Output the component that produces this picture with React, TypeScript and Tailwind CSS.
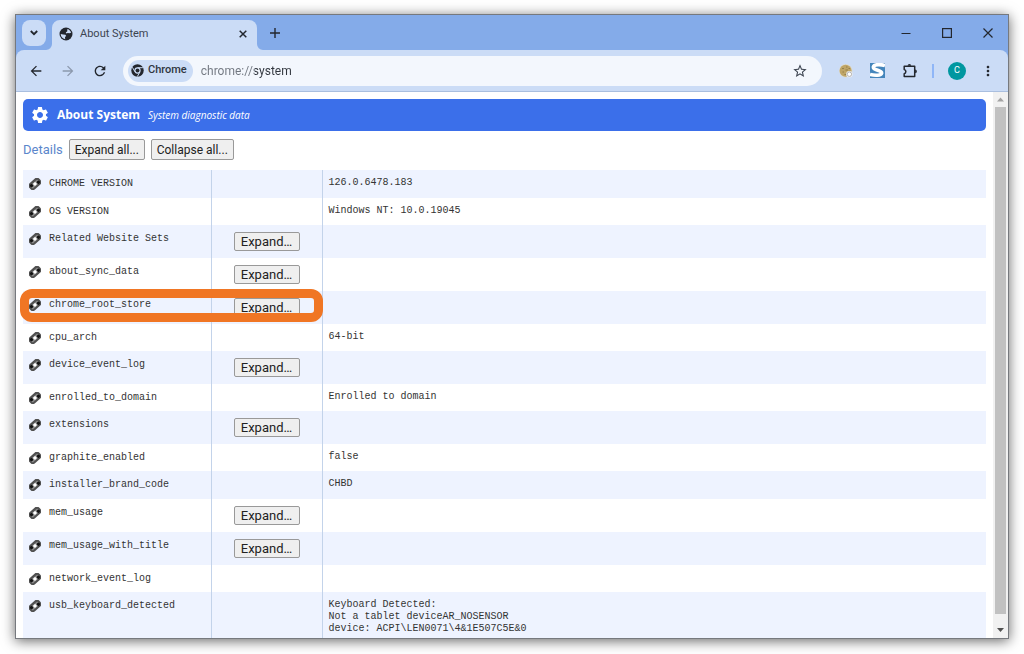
import React from 'react';
import { MdArrowBack, MdArrowForward, MdRefresh, MdSettings, MdStarBorder, MdMoreVert } from 'react-icons/md';

type LogEntry = {
    name: string;
    value?: string;
    expandable?: boolean;
    highlighted?: boolean;
};

const entries: LogEntry[] = [
    { name: 'CHROME VERSION', value: '126.0.6478.183' },
    { name: 'OS VERSION', value: 'Windows NT: 10.0.19045' },
    { name: 'Related Website Sets', expandable: true },
    { name: 'about_sync_data', expandable: true },
    { name: 'chrome_root_store', expandable: true, highlighted: true },
    { name: 'cpu_arch', value: '64-bit' },
    { name: 'device_event_log', expandable: true },
    { name: 'enrolled_to_domain', value: 'Enrolled to domain' },
    { name: 'extensions', expandable: true },
    { name: 'graphite_enabled', value: 'false' },
    { name: 'installer_brand_code', value: 'CHBD' },
    { name: 'mem_usage', expandable: true },
    { name: 'mem_usage_with_title', expandable: true },
    { name: 'network_event_log' },
    { name: 'usb_keyboard_detected', value: 'Keyboard Detected:\nNot a tablet deviceAR_NOSENSOR\ndevice: ACPI\\LEN0071\\4&1E507C5E&0' },
];

const LinkIcon: React.FC = () => (
    <svg viewBox="0 0 12 12" className="size-3 shrink-0" fill="none">
        <g transform="rotate(-42 6 6)">
            <rect x="-0.8" y="1.8" width="13.6" height="8.2" rx="3.6" fill="#505050" />
            <rect x="1" y="4" width="10" height="4" rx="1.6" fill="#888" />
            <rect x="0.8" y="3.4" width="3" height="3" rx="1" fill="#111" />
            <rect x="8.2" y="5.4" width="3" height="3" rx="1" fill="#111" />
            <rect x="4.4" y="4.4" width="3.2" height="3" rx="1" fill="#fff" />
        </g>
    </svg>
);

const GlobeIcon: React.FC = () => (
    <svg viewBox="0 0 14 14" className="size-3.5">
        <circle cx="7" cy="7" r="6.5" fill="#23272e" />
        <path d="M8.4 1.9C10.4 2.6 11.6 3.8 12.2 5.6L10.6 6.2 8.8 6 7.4 6.4 6.8 5.2 8.2 4.6ZM1.7 7 4.2 7.4 6.4 7.8 7.2 9 6 10 6.2 12.2C3.8 11.8 1.7 9.8 1.7 7Z" fill="#cbdcf6" />
    </svg>
);

const ChromeIcon: React.FC = () => (
    <svg viewBox="0 0 24 24" className="size-[13px]">
        <circle cx="12" cy="12" r="11.5" fill="#23272e" />
        <circle cx="12" cy="12" r="5.8" fill="#cbdcf6" />
        <circle cx="12" cy="12" r="3.6" fill="#23272e" />
        <path d="M12 6.8H22M7.5 14.6 2.5 6M16.5 14.6 11.5 23.4" stroke="#cbdcf6" strokeWidth="1.8" />
    </svg>
);

const CookieIcon: React.FC = () => (
    <svg viewBox="0 0 14 14" className="size-3.5">
        <circle cx="6.7" cy="6.8" r="6.7" fill="#dddbd0" />
        <circle cx="6.6" cy="6.8" r="6" fill="#bfa566" />
        <path d="M3 4.5h2M7 3h1.5M3.5 8H5M6.5 6h2.5M5.5 10.5H7M9.5 4.5H11" stroke="#8f7a48" strokeWidth="0.9" />
        <circle cx="10.4" cy="10.2" r="3.2" fill="#ededed" />
        <circle cx="10.4" cy="10.2" r="2.2" fill="#fff" stroke="#9a9a9a" strokeWidth="0.7" />
    </svg>
);

const SBadgeIcon: React.FC = () => (
    <svg viewBox="0 0 15 15" className="size-[15px]">
        <rect width="15" height="15" fill="#4485bb" />
        <path d="M15 2.6C11 1.2 4.4 1 3.4 3.8 2.6 7.4 12.4 7 11.6 10.2 11 12.6 5 12.8 0 11.4" fill="none" stroke="#fff" strokeWidth="3.6" />
    </svg>
);

const PuzzleIcon: React.FC = () => (
    <svg viewBox="0 0 16 16" className="size-4" fill="none" stroke="#23272e">
        <path d="M2.2 3.2H12.7V13.6H2.2V10.7C4.4 10.3 4.4 6.8 2.2 6.4Z" strokeWidth="1.5" strokeLinejoin="round" />
        <path d="M5.6 2.8a1.8 1.8 0 0 1 3.6 0ZM13.1 6.6a1.8 1.8 0 0 1 0 3.6Z" fill="#23272e" stroke="none" />
    </svg>
);

const TitleBar: React.FC = () => (
    <div className="flex h-[35px] items-end bg-[#84abe9] pl-1.5">
        <button aria-label="Search tabs" className="mb-1 flex h-[26px] w-6 items-center justify-center rounded-lg bg-[#cbdcf6]">
            <svg viewBox="0 0 8 6" className="h-1.5 w-2" fill="none" stroke="#23272e" strokeWidth="1.8">
                <path d="M.8 1 4 4.2 7.2 1" />
            </svg>
        </button>
        <div className="flex items-end">
            <svg viewBox="0 0 6 6" className="size-1.5" fill="#cbdcf6">
                <path d="M6 0V6H0A6 6 0 0 0 6 0Z" />
            </svg>
            <div className="flex h-[30px] w-[205px] items-center rounded-t-lg bg-[#cbdcf6] pr-2.5 pb-0.5 pl-[7px]">
                <GlobeIcon />
                <span className="ml-[7px] flex-1 text-[11px] text-[#3c4450]">About System</span>
                <button aria-label="Close tab">
                    <svg viewBox="0 0 8 8" className="size-2" stroke="#23272e" strokeWidth="1.5">
                        <path d="M.7.7 7.3 7.3M7.3.7.7 7.3" />
                    </svg>
                </button>
            </div>
            <svg viewBox="0 0 6 6" className="size-1.5" fill="#cbdcf6">
                <path d="M0 0V6H6A6 6 0 0 1 0 0Z" />
            </svg>
        </div>
        <button aria-label="New tab" className="mb-3 ml-[7px]">
            <svg viewBox="0 0 10 10" className="size-2.5" stroke="#23272e" strokeWidth="1.4">
                <path d="M5 0V10M0 5H10" />
            </svg>
        </button>
        <div className="mb-3 ml-auto flex gap-[31px] pr-[15px]">
            <button aria-label="Minimize">
                <svg viewBox="0 0 10 10" className="size-2.5" stroke="#23272e">
                    <path d="M.5 5.5H9.5" />
                </svg>
            </button>
            <button aria-label="Maximize">
                <svg viewBox="0 0 10 10" className="size-2.5" fill="none" stroke="#23272e" strokeWidth="1.2">
                    <rect x=".6" y=".6" width="8.8" height="8.8" />
                </svg>
            </button>
            <button aria-label="Close">
                <svg viewBox="0 0 10 10" className="size-2.5" stroke="#23272e" strokeWidth="1.2">
                    <path d="M.5.5 9.5 9.5M9.5.5.5 9.5" />
                </svg>
            </button>
        </div>
    </div>
);

const Toolbar: React.FC = () => (
    <div className="bg-[#84abe9]">
        <div className="flex h-[42px] items-center rounded-t-lg border-b border-[#aabfdf] bg-[#cbdcf6] pr-3 pl-3 text-[#23272e]">
            <div className="flex gap-4">
                <button aria-label="Back"><MdArrowBack className="size-4" /></button>
                <button aria-label="Forward"><MdArrowForward className="size-4 text-[#8c99ad]" /></button>
                <button aria-label="Reload"><MdRefresh className="size-4" /></button>
            </div>
            <div className="ml-[15px] flex h-[30px] flex-1 items-center rounded-full bg-[#f3f7fd] pr-3.5 pl-[5px]">
                <div className="flex h-[22px] items-center gap-1 rounded-full bg-[#cbdcf6] pr-1.5 pl-[3px] text-[11px] font-medium text-[#2f3640]">
                    <ChromeIcon />
                    Chrome
                </div>
                <input
                    aria-label="Address"
                    defaultValue="chrome://system"
                    className="ml-2 h-5 min-w-0 flex-1 bg-[linear-gradient(to_right,#70767f_54px,#30353d_54px)] bg-clip-text text-xs text-transparent outline-none"
                />
                <button aria-label="Bookmark"><MdStarBorder className="size-4 text-[#3c4450]" /></button>
            </div>
            <div className="ml-[17px] flex items-center">
                <button aria-label="Cookie settings"><CookieIcon /></button>
                <button aria-label="Snippet tool" className="ml-[17px]"><SBadgeIcon /></button>
                <button aria-label="Extensions" className="ml-[17px]"><PuzzleIcon /></button>
                <span className="ml-3.5 h-3.5 w-0.5 bg-[#8fb6f7]" />
                <button aria-label="Profile" className="ml-3.5 flex size-[18px] items-center justify-center rounded-full bg-[#0097a0] text-[9px] text-white">C</button>
                <button aria-label="Menu" className="ml-3.5"><MdMoreVert className="size-4" /></button>
            </div>
        </div>
    </div>
);

const LogRow: React.FC<{ entry: LogEntry }> = ({ entry }) => (
    <tr className={entry.expandable ? 'h-[33px] odd:bg-[#eef3ff]' : 'odd:h-7 odd:bg-[#eef3ff] even:h-[27px]'}>
        <th scope="row" className="relative border-r border-[#c3d3ea] p-0 pt-2 pl-1.5 text-left align-top font-normal">
            <div className="flex items-center gap-2">
                <LinkIcon />
                {entry.name}
            </div>
            {entry.highlighted && (
                <div className="absolute -top-0.5 -left-[3px] z-10 h-[33px] w-[303px] rounded-xl border-[9px] border-[#f07624]" />
            )}
        </th>
        <td className="border-r border-[#c3d3ea] p-0 align-middle">
            {entry.expandable && (
                <button className="mx-auto block h-[19px] w-[66px] rounded-xs border border-[#999] bg-[#efefef] font-[Roboto,sans-serif] text-[13px] leading-4 text-[#222]">Expand…</button>
            )}
        </td>
        <td className="p-0 pt-[7px] pb-1 pl-1.5 align-top">
            <pre className="font-[inherit]">{entry.value}</pre>
        </td>
    </tr>
);

const ScrollBar: React.FC = () => (
    <div className="flex w-[15px] shrink-0 flex-col items-center bg-[#f1f1f1]">
        <svg viewBox="0 0 15 15" className="size-[15px] shrink-0" fill="#a3a3a3">
            <path d="M7.5 5.5 11 9.5H4Z" />
        </svg>
        <div className="w-[11px] flex-1 bg-[#c1c1c1]" />
        <svg viewBox="0 0 15 24" className="h-6 w-[15px] shrink-0" fill="#505050">
            <path d="M7.5 18 11 14H4Z" />
        </svg>
    </div>
);

const App: React.FC = () => (
    <div className="h-screen bg-white px-[15px] pt-3.5 pb-[15px] font-[Roboto,sans-serif]">
        <div className="flex h-full flex-col overflow-hidden border border-[#76797e] bg-white shadow-[0_2px_12px_rgba(0,0,0,0.6)]">
            <TitleBar />
            <Toolbar />
            <div className="flex min-h-0 flex-1">
                <main className="min-w-0 flex-1 overflow-hidden px-[7px] pt-[7px]">
                    <header className="flex h-8 items-center rounded-[5px] bg-[#3b6fea] pl-[7px] font-['Open_Sans',sans-serif] text-white">
                        <MdSettings className="size-5" />
                        <h1 className="ml-[7px] text-xs font-bold">About System</h1>
                        <span className="ml-2 text-[10px] italic">System diagnostic data</span>
                    </header>
                    <div className="mt-2 mb-2.5 flex h-[21px] items-center text-[#222]">
                        <h2 className="text-[13px] text-[#5b86cb]">Details</h2>
                        <button className="ml-1.5 h-[21px] w-[76px] rounded-xs border border-[#999] bg-[#efefef] text-xs">Expand all...</button>
                        <button className="ml-1.5 h-[21px] w-[83px] rounded-xs border border-[#999] bg-[#efefef] text-xs">Collapse all...</button>
                    </div>
                    <table className="w-full table-fixed border-collapse font-['Liberation_Mono',monospace] text-[10px] leading-3 text-[#333]">
                        <colgroup>
                            <col className="w-[188px]" />
                            <col className="w-[111px]" />
                            <col />
                        </colgroup>
                        <tbody>
                            {entries.map(entry => (
                                <LogRow key={entry.name} entry={entry} />
                            ))}
                        </tbody>
                    </table>
                </main>
                <ScrollBar />
            </div>
        </div>
    </div>
);

export default App;
